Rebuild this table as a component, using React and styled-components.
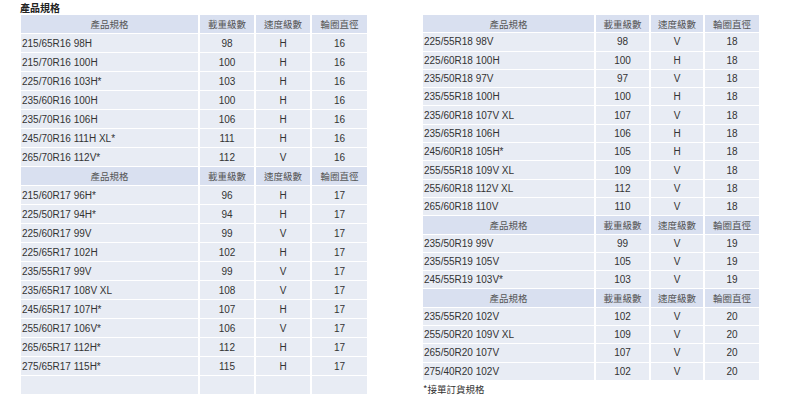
import React from "react";
import styled, { createGlobalStyle } from "styled-components";

const Global = createGlobalStyle`
  html, body { margin: 0; padding: 0; background: #ffffff; }
  body { font-family: "Liberation Sans", "Noto Sans CJK TC", sans-serif; color: #333; }
`;

const Page = styled.div`
  width: 800px;
  height: 400px;
  padding: 1px 0 0 20px;
  box-sizing: border-box;
  overflow: hidden;
`;

const Title = styled.div`
  font-family: "Noto Sans CJK TC", sans-serif;
  font-weight: 700;
  font-size: 10px;
  line-height: 13px;
  height: 14px;
  color: #222;
`;

const Columns = styled.div`
  display: flex;
  gap: 56px;
  align-items: flex-start;
`;

const Side = styled.div`
  display: flex;
  flex-direction: column;
  padding-left: ${(p) => p.$indent || 0}px;
`;

const Grid = styled.div`
  display: grid;
  grid-template-columns: ${(p) => p.$cols};
  grid-auto-rows: ${(p) => p.$row}px;
  column-gap: 2px;
  row-gap: 1px;
`;

const Cell = styled.div`
  display: flex;
  align-items: center;
  justify-content: ${(p) => (p.$left ? "flex-start" : "center")};
  padding-left: ${(p) => (p.$left ? "1px" : "0")};
  background: ${(p) => (p.$head ? "#d9e0f0" : "#e8ecf4")};
  font-family: ${(p) =>
    p.$head ? '"Noto Sans CJK TC", sans-serif' : '"Liberation Sans", "Noto Sans CJK TC", sans-serif'};
  font-size: ${(p) => (p.$head ? "9.5px" : "10px")};
  color: ${(p) => (p.$head ? "#555" : "#333")};
  white-space: nowrap;
  overflow: hidden;
`;

const Note = styled.div`
  font-family: "Noto Sans CJK TC", sans-serif;
  font-size: 9.5px;
  color: #333;
  margin-top: 3px;
  line-height: 12px;
`;

const HEAD = ["產品規格", "載重級數", "速度級數", "輪圈直徑"];

const left = [
  "H",
  ["215/65R16 98H", "98", "H", "16"],
  ["215/70R16 100H", "100", "H", "16"],
  ["225/70R16 103H*", "103", "H", "16"],
  ["235/60R16 100H", "100", "H", "16"],
  ["235/70R16 106H", "106", "H", "16"],
  ["245/70R16 111H XL*", "111", "H", "16"],
  ["265/70R16 112V*", "112", "V", "16"],
  "H",
  ["215/60R17 96H*", "96", "H", "17"],
  ["225/50R17 94H*", "94", "H", "17"],
  ["225/60R17 99V", "99", "V", "17"],
  ["225/65R17 102H", "102", "H", "17"],
  ["235/55R17 99V", "99", "V", "17"],
  ["235/65R17 108V XL", "108", "V", "17"],
  ["245/65R17 107H*", "107", "H", "17"],
  ["255/60R17 106V*", "106", "V", "17"],
  ["265/65R17 112H*", "112", "H", "17"],
  ["275/65R17 115H*", "115", "H", "17"],
  ["", "", "", ""],
];

const right = [
  "H",
  ["225/55R18 98V", "98", "V", "18"],
  ["225/60R18 100H", "100", "H", "18"],
  ["235/50R18 97V", "97", "V", "18"],
  ["235/55R18 100H", "100", "H", "18"],
  ["235/60R18 107V XL", "107", "V", "18"],
  ["235/65R18 106H", "106", "H", "18"],
  ["245/60R18 105H*", "105", "H", "18"],
  ["255/55R18 109V XL", "109", "V", "18"],
  ["255/60R18 112V XL", "112", "V", "18"],
  ["265/60R18 110V", "110", "V", "18"],
  "H",
  ["235/50R19 99V", "99", "V", "19"],
  ["235/55R19 105V", "105", "V", "19"],
  ["245/55R19 103V*", "103", "V", "19"],
  "H",
  ["235/55R20 102V", "102", "V", "20"],
  ["255/50R20 109V XL", "109", "V", "20"],
  ["265/50R20 107V", "107", "V", "20"],
  ["275/40R20 102V", "102", "V", "20"],
];

function SpecTable({ rows, cols, row }) {
  return (
    <Grid $cols={cols} $row={row}>
      {rows.map((r, i) =>
        r === "H"
          ? HEAD.map((h, j) => (
              <Cell key={`${i}-${j}`} $head>
                {h}
              </Cell>
            ))
          : r.map((v, j) => (
              <Cell key={`${i}-${j}`} $left={j === 0}>
                {v}
              </Cell>
            ))
      )}
    </Grid>
  );
}

export default function App() {
  return (
    <>
      <Global />
      <Page>
        <Title>產品規格</Title>
        <Columns>
          <Side $indent={1}>
            <SpecTable rows={left} cols="177px 54px 54px 55px" row={18} />
          </Side>
          <Side>
            <SpecTable rows={right} cols="171px 53px 52px 54px" row={17.3} />
            <Note>*接單訂貨規格</Note>
          </Side>
        </Columns>
      </Page>
    </>
  );
}
